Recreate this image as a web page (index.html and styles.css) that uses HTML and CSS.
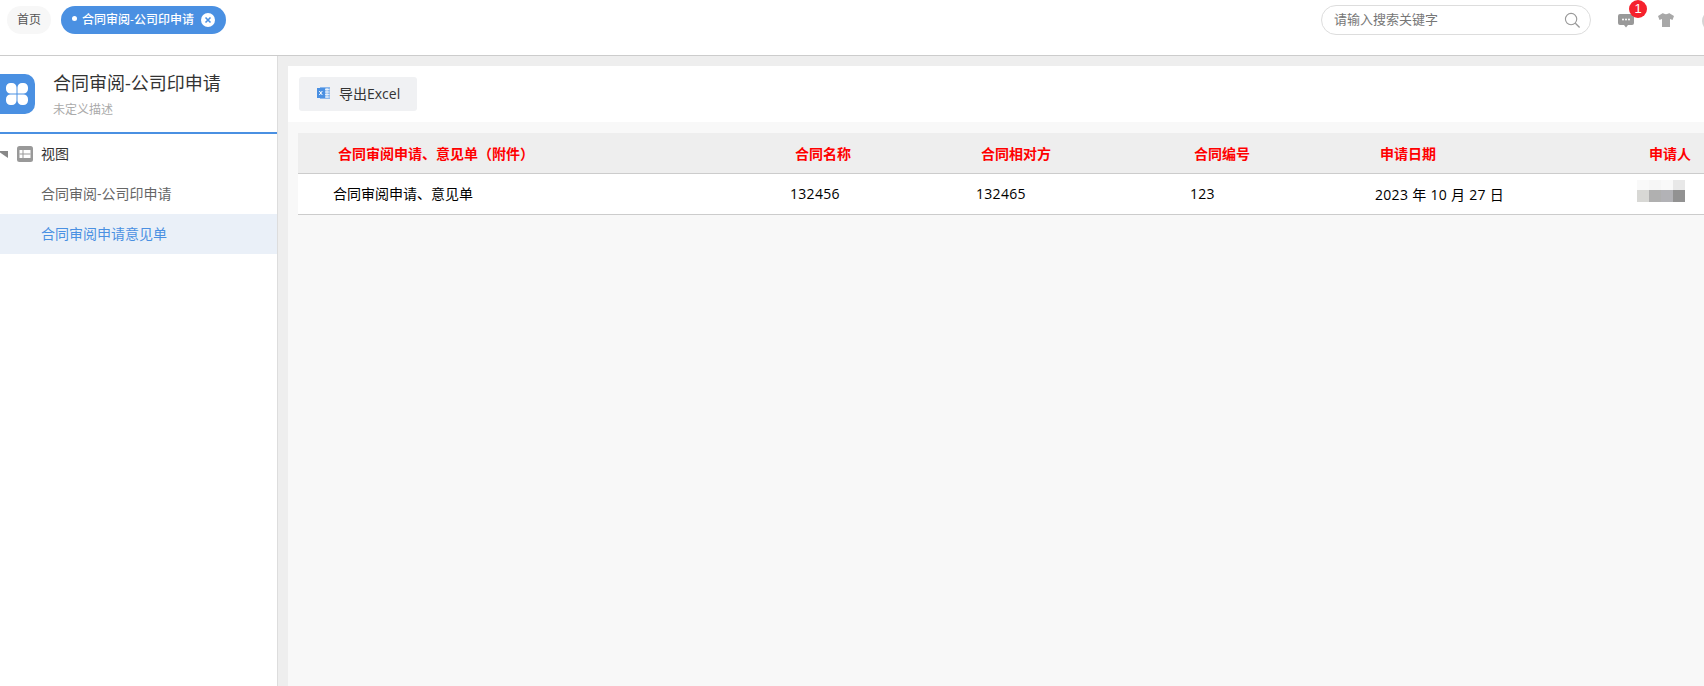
FILE: index.html
```html
<!DOCTYPE html>
<html lang="zh">
<head>
<meta charset="utf-8">
<title>合同审阅-公司印申请</title>
<link rel="stylesheet" href="styles.css">
</head>
<body>
<header class="topbar">
  <div class="tabs">
    <span class="tab">首页</span>
    <span class="tab tab-active"><i class="dot"></i>合同审阅-公司印申请<svg class="tab-close" viewBox="0 0 14 14" width="14" height="14"><circle cx="7" cy="7" r="7" fill="#fff"/><path d="M4.500 4.500l5 5M9.500 4.500l-5 5" stroke="#4a90e2" stroke-width="1.600"/></svg></span>
  </div>
  <div class="tools">
    <div class="search">
      <span class="placeholder">请输入搜索关键字</span>
      <svg viewBox="0 0 18 18" width="17" height="17"><circle cx="7.500" cy="7.500" r="6" fill="none" stroke="#999" stroke-width="1.200"/><path d="M12 12l4.500 4.500" stroke="#999" stroke-width="1.400"/></svg>
    </div>
    <div class="tool tool-msg">
      <svg viewBox="0 0 16 14" width="16" height="14"><path d="M2 0h12a2 2 0 0 1 2 2v7a2 2 0 0 1-2 2h-4l-2 2.500-2-2.500H2a2 2 0 0 1-2-2V2a2 2 0 0 1 2-2z" fill="#999"/><circle cx="5" cy="5.500" r="1" fill="#fff"/><circle cx="8" cy="5.500" r="1" fill="#fff"/><circle cx="11" cy="5.500" r="1" fill="#fff"/></svg>
      <span class="badge">1</span>
    </div>
    <div class="tool tool-shirt">
      <svg viewBox="0 0 16 14" width="16" height="14"><path d="M5 0L0 3l1.500 4L4 6v8h8V6l2.500 1L16 3l-5-3c-.5 1.500-5.500 1.500-6 0z" fill="#a8a8a8"/></svg>
    </div>
    <span class="avatar"></span>
  </div>
</header>
<div class="main">
  <aside class="sidebar">
    <div class="app-head">
      <span class="app-logo">
        <svg viewBox="0 0 24 22" width="24" height="22"><g fill="#fff"><path d="M5.500 0h1.500a4.500 4.500 0 0 1 4.500 4.500v6H5.500a4.500 4.500 0 0 1-4.500-4.500V4.500A4.500 4.500 0 0 1 5.500 0z"/><path d="M18.500 0H17a4.500 4.500 0 0 0-4.500 4.500v6h6a4.500 4.500 0 0 0 4.500-4.500V4.500A4.500 4.500 0 0 0 18.500 0z"/><path d="M5.500 22H7a4.500 4.500 0 0 0 4.500-4.500v-6H5.500A4.500 4.500 0 0 0 1 16v1.500A4.500 4.500 0 0 0 5.500 22z"/><path d="M18.500 22H17a4.500 4.500 0 0 1-4.500-4.500v-6h6A4.500 4.500 0 0 1 23 16v1.500a4.500 4.500 0 0 1-4.500 4.500z"/></g></svg>
      </span>
      <div>
        <div class="app-title">合同审阅-公司印申请</div>
        <div class="app-desc">未定义描述</div>
      </div>
    </div>
    <div class="tree-head">
      <i class="caret"></i>
      <svg viewBox="0 0 16 16" width="16" height="16"><rect width="16" height="16" rx="2.500" fill="#999"/><path d="M2.500 4h11v8h-11z" fill="#fff"/><path d="M6 4v8M2.500 8h11" stroke="#999"/></svg>
      <span class="tree-label">视图</span>
    </div>
    <div class="tree-item">合同审阅-公司印申请</div>
    <div class="tree-item tree-item-active">合同审阅申请意见单</div>
  </aside>
  <div class="gutter"></div>
  <section class="content">
    <div class="toolbar">
      <button class="btn">
        <svg viewBox="0 0 13 12" width="13" height="12"><path d="M3 0h10v12H3z" fill="#8db8ec"/><path d="M8 2.500h4.500M8 5h4.500M8 7.500h4.500M8 10h4.500M10 1v10" stroke="#fff" stroke-width=".7"/><path d="M0 1h8v10H0z" fill="#4a90e2"/><path d="M2.300 4l3 4M5.300 4l-3 4" stroke="#fff"/></svg>
        导出Excel
      </button>
    </div>
    <div class="table-wrap">
      <table class="grid">
        <colgroup><col class="c1"><col class="c2"><col class="c3"><col class="c4"><col class="c5"><col class="c6"></colgroup>
        <thead>
          <tr><th>合同审阅申请、意见单（附件）</th><th>合同名称</th><th>合同相对方</th><th class="th-no">合同编号</th><th>申请日期</th><th class="th-last">申请人</th></tr>
        </thead>
        <tbody>
          <tr>
            <td>合同审阅申请、意见单</td><td class="num">132456</td><td class="num">132465</td><td class="num">123</td><td class="num">2023 年 10 月 27 日</td>
            <td><span class="blur"><i class="p1"></i><i class="p2"></i><i class="p3"></i><i class="p4"></i><i class="p5"></i><i class="p6"></i><i class="p7"></i><i class="p8"></i></span></td>
          </tr>
        </tbody>
      </table>
    </div>
  </section>
</div>
</body>
</html>
```
FILE: styles.css
```css
* { box-sizing: border-box; }
html, body { margin: 0; height: 100%; overflow: hidden; }
body { font-family: "Open Sans", "Noto Sans CJK SC", sans-serif; font-size: 14px; color: #333; background: #fff; display: flex; flex-direction: column; }

.topbar { height: 56px; flex: none; border-bottom: 1px solid #ccc; display: flex; justify-content: space-between; padding: 6px 0 0 7px; background: #fff; }
.tabs { display: flex; gap: 10px; align-items: flex-start; }
.tab { height: 28px; border-radius: 14px; padding: 0 10px; background: #f7f7f7; color: #555; font-size: 12px; line-height: 28px; display: flex; align-items: center; }
.tab-active { background: #4a90e2; color: #fff; padding: 0 11px; font-weight: 500; }
.dot { width: 5px; height: 5px; border-radius: 50%; background: #fff; margin: -3px 5px 0 0; }
.tab-close { margin-left: 7px; }

.tools { display: flex; align-items: flex-start; margin-right: -20px; }
.search { width: 270px; height: 30px; margin-top: -1px; border: 1px solid #ddd; border-radius: 15px; padding: 0 9px 0 12px; display: flex; justify-content: space-between; align-items: center; }
.placeholder { font-size: 13px; color: #777; padding-bottom: 3px; }
.tool { position: relative; width: 16px; height: 14px; margin-top: 8px; }
.tool svg { display: block; }
.tool-msg { margin-left: 27px; }
.tool-shirt { margin-left: 24px; margin-top: 7px; }
.badge { position: absolute; left: 11px; top: -14px; width: 18px; height: 18px; border-radius: 50%; background: #f5222d; color: #fff; font-family: "Liberation Sans", sans-serif; font-size: 13px; line-height: 18px; text-align: center; }
.avatar { width: 22px; height: 22px; margin: 4px 0 0 28px; border-radius: 50%; background: #d5d5d5; }

.main { flex: 1; display: flex; min-height: 0; }
.sidebar { width: 278px; flex: none; border-right: 1px solid #ddd; background: #fff; }
.app-head { height: 78px; border-bottom: 2px solid #4a90e2; display: flex; align-items: center; gap: 18px; }
.app-logo { width: 36px; height: 40px; margin-left: -1px; border-radius: 0 10px 10px 0; background: #4a90e2; display: flex; align-items: center; justify-content: center; flex: none; }
.app-title { font-size: 18px; line-height: 24px; color: #333; padding-top: 1px; }
.app-desc { font-size: 12px; line-height: 18px; color: #aaa; margin-top: 6px; }

.tree-head { height: 40px; display: flex; align-items: center; gap: 8px; color: #333; }
.tree-label { padding-bottom: 2px; }
.caret { width: 0; height: 0; border-top: 7px solid #888; border-left: 10px solid transparent; margin-left: -2px; margin-right: 1px; }
.tree-item { height: 40px; line-height: 40px; padding-left: 41px; color: #666; }
.tree-item-active { background: #eaf0f8; color: #4a90e2; }

.gutter { width: 10px; flex: none; background: #eee; }
.content { flex: 1; min-width: 0; background: #f8f8f8; box-shadow: inset 0 10px 0 #eee; }
.toolbar { height: 56px; margin-top: 10px; background: #fff; padding: 11px 11px 0; }
.btn { width: 118px; height: 34px; border: 0; border-radius: 3px; background: #f0f1f3; font: inherit; color: #333; display: flex; align-items: center; gap: 9px; padding: 0 0 2px 18px; }
.table-wrap { padding: 11px 0 0 10px; }
.grid { width: 1406px; table-layout: fixed; border-collapse: collapse; color: #000; }
.c1 { width: 457px; } .c2 { width: 186px; } .c3 { width: 214px; } .c4 { width: 185px; } .c5 { width: 262px; } .c6 { width: 102px; }
.grid th { height: 40px; background: #eee; color: #f00; font-weight: 700; font-size: 14px; text-align: left; padding: 0 0 0 40px; border-bottom: 1px solid #ccc; }
.grid .th-no { padding-left: 39px; }
.grid .th-last { padding-left: 47px; }
.grid td { height: 41px; background: #fff; padding: 0 0 2px 35px; border-bottom: 1px solid #ccc; }
.grid .num { letter-spacing: .3px; padding-bottom: 0; }
.blur { display: grid; grid-template-columns: repeat(4, 12px); grid-template-rows: 10px 12px; width: 48px; margin-bottom: 4px; }
.blur i { display: block; }
.p1 { background: #f9f9f9; } .p2 { background: #f6f6f6; } .p3 { background: #f9f9f9; } .p4 { background: #e8e8e8; }
.p5 { background: #d8d8d5; } .p6 { background: #b0b0b0; } .p7 { background: #b2b2b6; } .p8 { background: #929292; }
```
